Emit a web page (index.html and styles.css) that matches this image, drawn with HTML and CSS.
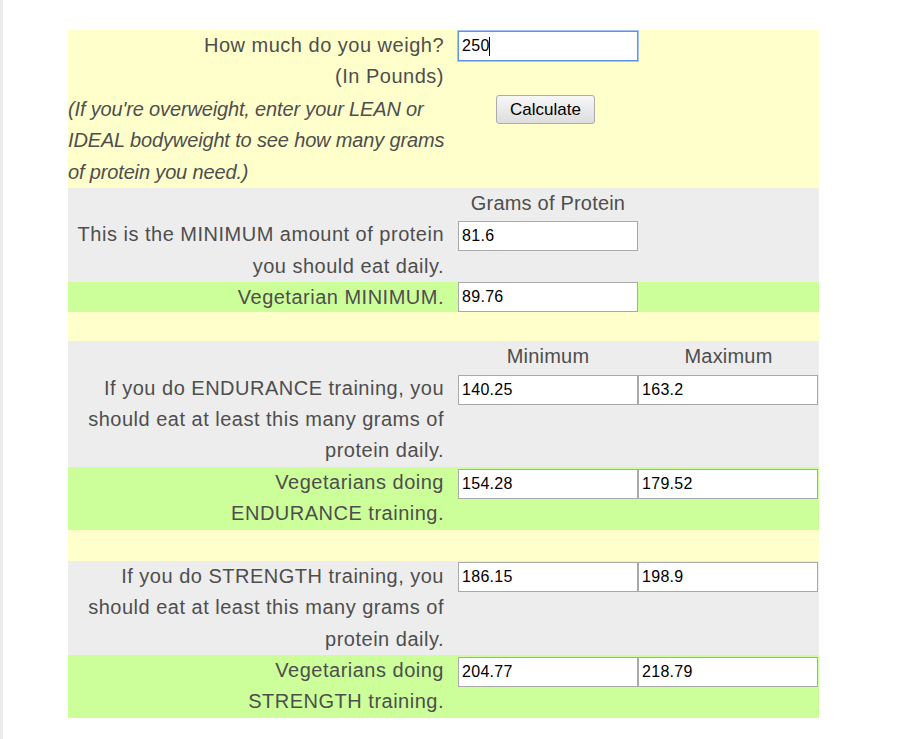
FILE: index.html
```html
<!DOCTYPE html>
<html lang="en">
<head>
<meta charset="utf-8">
<title>Protein Calculator</title>
<link rel="stylesheet" href="styles.css">
</head>
<body>
<table class="calc">
  <colgroup><col class="c1"><col class="c2"><col class="c3"></colgroup>
  <tr class="yellow">
    <td class="label">
      <div class="right">How much do you weigh?<br>(In Pounds)</div>
      <div class="note">(If you're overweight, enter your LEAN or<br>IDEAL bodyweight to see how many grams<br>of protein you need.)</div>
    </td>
    <td class="field">
      <div class="focus-wrap"><input class="num focused" type="text" value="250"><span class="caret"></span></div>
      <div class="btn-row"><button class="calc-btn" type="button">Calculate</button></div>
    </td>
    <td></td>
  </tr>
  <tr class="gray"><td></td><td class="head">Grams of Protein</td><td></td></tr>
  <tr class="gray">
    <td class="label">This is the MINIMUM amount of protein you should eat daily.</td>
    <td class="field"><input class="num" type="text" value="81.6"></td>
    <td></td>
  </tr>
  <tr class="green short">
    <td class="label">Vegetarian MINIMUM.</td>
    <td class="field"><input class="num" type="text" value="89.76"></td>
    <td></td>
  </tr>
  <tr class="yellow spacer-a"><td colspan="3"></td></tr>
  <tr class="gray"><td></td><td class="head">Minimum</td><td class="head">Maximum</td></tr>
  <tr class="gray">
    <td class="label">If you do ENDURANCE training, you should eat at least this many grams of protein daily.</td>
    <td class="field"><input class="num" type="text" value="140.25"></td>
    <td class="field"><input class="num" type="text" value="163.2"></td>
  </tr>
  <tr class="green">
    <td class="label">Vegetarians doing<br>ENDURANCE training.</td>
    <td class="field"><input class="num" type="text" value="154.28"></td>
    <td class="field"><input class="num" type="text" value="179.52"></td>
  </tr>
  <tr class="yellow spacer-b"><td colspan="3"></td></tr>
  <tr class="gray">
    <td class="label">If you do STRENGTH training, you should eat at least this many grams of protein daily.</td>
    <td class="field tight"><input class="num" type="text" value="186.15"></td>
    <td class="field tight"><input class="num" type="text" value="198.9"></td>
  </tr>
  <tr class="green">
    <td class="label">Vegetarians doing<br>STRENGTH training.</td>
    <td class="field"><input class="num" type="text" value="204.77"></td>
    <td class="field"><input class="num" type="text" value="218.79"></td>
  </tr>
</table>
</body>
</html>
```
FILE: styles.css
```css
html, body {
  margin: 0;
  padding: 0;
  background: #ffffff;
}
body {
  border-left: 3px solid #ebebec;
  min-height: 100vh;
  box-sizing: border-box;
  padding-top: 30px;
  font-family: "Liberation Sans", Arial, sans-serif;
}
.calc {
  margin-left: 65px;
  width: 751px;
  table-layout: fixed;
  border-collapse: collapse;
  border-spacing: 0;
  font-size: 20px;
  letter-spacing: 0.5px;
  line-height: 31.4px;
  color: #4e4e4e;
}
.c1 { width: 390px; }
.c2 { width: 180px; }
.c3 { width: 181px; }
.calc td {
  padding: 0;
  vertical-align: top;
}
.yellow { background: #ffffcc; }
.gray { background: #ededed; }
.green { background: #ccff99; }
.label {
  text-align: right;
  padding-right: 14px !important;
}
.note {
  text-align: left;
  font-style: italic;
  letter-spacing: -0.15px;
  white-space: nowrap;
  margin-top: 1px;
}
.head {
  text-align: center;
  letter-spacing: 0.2px;
}
.short td { line-height: 30px; }
.spacer-a td { height: 29px; }
.spacer-b td { height: 31px; }
.field { padding-top: 2px !important; }
.short .field { padding-top: 0 !important; }
.tight { padding-top: 1px !important; }
.num {
  display: block;
  box-sizing: border-box;
  width: 180px;
  height: 30px;
  margin: 0;
  padding: 0 3px;
  border: 1px solid #a9a9a9;
  background: #ffffff;
  font-family: "Liberation Sans", Arial, sans-serif;
  font-size: 16px;
  letter-spacing: 0.3px;
  color: #000000;
  outline: none;
}
.yellow .field { padding-top: 1px !important; }
.focus-wrap {
  position: relative;
  height: 30px;
}
.focused {
  border-color: #5d95e0;
  box-shadow: 0 0 0 1px #a3c3f0;
}
.caret {
  position: absolute;
  left: 31px;
  top: 6px;
  width: 1px;
  height: 19px;
  background: #000000;
}
.btn-row {
  display: flex;
  justify-content: center;
  margin-top: 34px;
  padding-right: 5px;
}
.calc-btn {
  box-sizing: border-box;
  width: 99px;
  height: 29px;
  padding: 0;
  border: 1px solid #acacac;
  border-radius: 3px;
  background: linear-gradient(#f7f7f7, #dddddd);
  font-family: "Liberation Sans", Arial, sans-serif;
  font-size: 17px;
  color: #000000;
}
```
